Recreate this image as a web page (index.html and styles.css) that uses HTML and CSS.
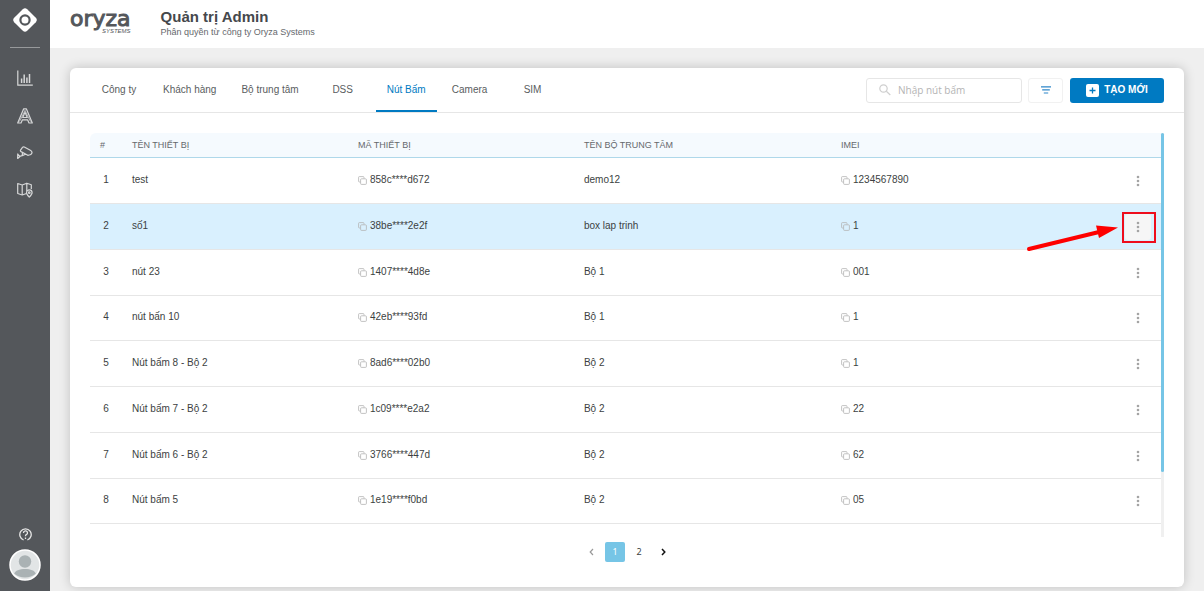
FILE: index.html
```html
<!DOCTYPE html>
<html lang="vi">
<head>
<meta charset="utf-8">
<meta name="viewport" content="width=device-width, initial-scale=1">
<title>Quản trị Admin</title>
<link rel="stylesheet" href="styles.css">
</head>
<body>
<svg class="sprite" aria-hidden="true">
  <symbol id="copy" viewBox="0 0 9 9"><path d="M2.500 6H1.400a.8.8 0 0 1-.8-.8V1.400a.8.8 0 0 1 .8-.8h3.800a.8.8 0 0 1 .8.8v1.100M3.500 2.800h4a.9.9 0 0 1 .9.9v3.800a.9.9 0 0 1-.9.9h-4a.9.9 0 0 1-.9-.9V3.700a.9.9 0 0 1 .9-.9z" fill="none" stroke="#b4b4b4" stroke-width=".8"/></symbol>
  <symbol id="dots" viewBox="0 0 4 12"><g fill="#a4a4a4"><circle cx="2" cy="2" r="1.300"/><circle cx="2" cy="6" r="1.300"/><circle cx="2" cy="10" r="1.300"/></g></symbol>
</svg>
<div class="app">
  <aside class="sidebar">
    <a class="mark" href="#" aria-label="Oryza">
      <svg width="24" height="24" viewBox="0 0 24 24"><path d="M9.800 1.200Q12-.8 14.200 1.200L22.800 9.800Q24.800 12 22.800 14.200L14.200 22.800Q12 24.800 9.800 22.800L1.200 14.200Q-.8 12 1.200 9.800Z" fill="#fff"/><circle cx="12" cy="12" r="4.600" fill="none" stroke="#54575b" stroke-width="2.200"/></svg>
    </a>
    <nav class="side-nav">
      <a href="#" aria-label="Thống kê"><svg width="16" height="16" viewBox="0 0 16 16" fill="none" stroke="#d6d7d8" stroke-width="1.200"><path d="M.8.500V15.200H15.800"/><path d="M4.600 13V8.500M7.200 13V4.500M9.900 13V7.500M12.500 13V4" stroke-width="1.500"/></svg></a>
      <a href="#" aria-label="Phân quyền"><svg width="16" height="16" viewBox="0 0 16 16" fill="none" stroke="#d6d7d8" stroke-width="1.200" stroke-linejoin="round"><path d="M6.700.8H9.300L15.300 15H12L10.600 11.800H5.400L4 15H.7Z"/><path d="M8 4.200 10.300 9.500H5.700Z"/><path d="M2.500 13.500 8 2.300 13.500 13.500" stroke-width=".7"/></svg></a>
      <a href="#" aria-label="Camera"><svg width="16" height="14" viewBox="0 0 16 14" fill="none" stroke="#d6d7d8" stroke-width="1.200" stroke-linejoin="round"><path d="M5.500 1.400Q6.200.5 7.300 1L13.300 4.300Q15.600 5.600 14.800 7.300 14.200 9 12.300 9L10.800 9.300 4 5.600Q3 4.900 3.700 3.900ZM5.500 6.600 5.200 9.600 2 10.500M.7 7.500V13M.9 8.500 3 10.500.9 12.400M5.200 9.600 8.500 8.200"/></svg></a>
      <a href="#" aria-label="Bản đồ"><svg width="16" height="16" viewBox="0 0 16 16" fill="none" stroke="#d6d7d8" stroke-width="1.200" stroke-linejoin="round"><path d="M9.500 11.500 5.200 13 .7 11.500V1.500L5.200 3 9.800 1.200 14.300 2.700V7M5.200 3V13M9.800 1.200V9"/><path d="M12.300 15.200C10.300 13 9.500 12 9.500 10.700A2.800 2.800 0 0 1 15.100 10.700C15.100 12 14.300 13 12.300 15.200Z"/><circle cx="12.300" cy="10.700" r=".8"/></svg></a>
    </nav>
    <div class="side-foot">
      <a href="#" aria-label="Trợ giúp"><svg width="13" height="13" viewBox="0 0 13 13" fill="none" stroke="#e6e6e6" stroke-width="1.300"><path d="M4.600 12A5.700 5.700 0 1 1 8.400 12"/><path d="M4.500 5A2 2 0 1 1 7.300 6.700Q6.500 7.100 6.500 8.200M6.500 9.600V11"/></svg></a>
      <button class="avatar" type="button" aria-label="Tài khoản"><svg width="32" height="32" viewBox="0 0 32 32"><circle cx="16" cy="16" r="15" fill="#e2e5e6" stroke="#fff" stroke-width="1.500"/><circle cx="16" cy="12.500" r="6.200" fill="#aab2b4"/><path d="M5.200 24.800C6 21.500 10.500 20 16 20S26 21.500 26.800 24.800Q22.500 28.500 16 28.500T5.200 24.800Z" fill="#aab2b4"/></svg></button>
    </div>
  </aside>
  <div class="page">
    <header class="topbar">
      <a class="brand" href="#"><span class="brand-name">oryza</span><span class="brand-sub">SYSTEMS</span></a>
      <div class="heading">
        <h1>Quản trị Admin</h1>
        <p>Phân quyền từ công ty Oryza Systems</p>
      </div>
    </header>
    <main class="content">
      <section class="card">
        <div class="toolbar">
          <nav class="tabs">
            <a href="#">Công ty</a>
            <a href="#">Khách hàng</a>
            <a href="#">Bộ trung tâm</a>
            <a href="#">DSS</a>
            <a href="#" class="active" aria-current="page">Nút Bấm</a>
            <a href="#">Camera</a>
            <a href="#">SIM</a>
          </nav>
          <div class="tools">
            <label class="search">
              <svg width="12" height="12" viewBox="0 0 12 12" fill="none" stroke="#cfcfcf" stroke-width="1.200"><circle cx="4.500" cy="4.500" r="3.700"/><path d="M7.300 7.300 11.300 11"/></svg>
              <input type="text" placeholder="Nhập nút bấm" aria-label="Nhập nút bấm">
            </label>
            <button class="filter" type="button" aria-label="Bộ lọc"><svg width="10" height="8" viewBox="0 0 10 8" stroke="#2f87c9" stroke-width="1.200"><path d="M0 .8H10M1.200 3.900H8.800M2.800 7H7.200"/></svg></button>
            <button class="create" type="button"><svg width="13" height="13" viewBox="0 0 13 13"><rect width="13" height="13" rx="2" fill="#fff"/><path d="M6.500 3.500V9.500M3.500 6.500H9.500" stroke="#007ac2" stroke-width="1.300"/></svg>TẠO MỚI</button>
          </div>
        </div>
        <div class="table-area">
          <table>
            <colgroup><col class="c-no"><col class="c-name"><col class="c-code"><col class="c-box"><col><col class="c-act"></colgroup>
            <thead><tr><th>#</th><th>TÊN THIẾT BỊ</th><th>MÃ THIẾT BỊ</th><th>TÊN BỘ TRUNG TÂM</th><th>IMEI</th><th></th></tr></thead>
            <tbody>
              <tr><td>1</td><td>test</td><td><svg class="copy"><use href="#copy"/></svg>858c****d672</td><td>demo12</td><td><svg class="copy"><use href="#copy"/></svg>1234567890</td><td><button class="more" type="button" aria-label="Thao tác"><svg><use href="#dots"/></svg></button></td></tr>
              <tr class="selected"><td>2</td><td>số1</td><td><svg class="copy"><use href="#copy"/></svg>38be****2e2f</td><td>box lap trinh</td><td><svg class="copy"><use href="#copy"/></svg>1</td><td><button class="more" type="button" aria-label="Thao tác"><svg><use href="#dots"/></svg></button><span class="callout"><svg width="94" height="28" viewBox="0 0 94 28"><path d="M3 24 72 7.200" stroke="#fe0000" stroke-width="4" stroke-linecap="round"/><path d="M92 2.500 70 .5 73 13Z" fill="#fe0000"/></svg></span></td></tr>
              <tr><td>3</td><td>nút 23</td><td><svg class="copy"><use href="#copy"/></svg>1407****4d8e</td><td>Bộ 1</td><td><svg class="copy"><use href="#copy"/></svg>001</td><td><button class="more" type="button" aria-label="Thao tác"><svg><use href="#dots"/></svg></button></td></tr>
              <tr><td>4</td><td>nút bấn 10</td><td><svg class="copy"><use href="#copy"/></svg>42eb****93fd</td><td>Bộ 1</td><td><svg class="copy"><use href="#copy"/></svg>1</td><td><button class="more" type="button" aria-label="Thao tác"><svg><use href="#dots"/></svg></button></td></tr>
              <tr><td>5</td><td>Nút bấm 8 - Bộ 2</td><td><svg class="copy"><use href="#copy"/></svg>8ad6****02b0</td><td>Bộ 2</td><td><svg class="copy"><use href="#copy"/></svg>1</td><td><button class="more" type="button" aria-label="Thao tác"><svg><use href="#dots"/></svg></button></td></tr>
              <tr><td>6</td><td>Nút bấm 7 - Bộ 2</td><td><svg class="copy"><use href="#copy"/></svg>1c09****e2a2</td><td>Bộ 2</td><td><svg class="copy"><use href="#copy"/></svg>22</td><td><button class="more" type="button" aria-label="Thao tác"><svg><use href="#dots"/></svg></button></td></tr>
              <tr><td>7</td><td>Nút bấm 6 - Bộ 2</td><td><svg class="copy"><use href="#copy"/></svg>3766****447d</td><td>Bộ 2</td><td><svg class="copy"><use href="#copy"/></svg>62</td><td><button class="more" type="button" aria-label="Thao tác"><svg><use href="#dots"/></svg></button></td></tr>
              <tr><td>8</td><td>Nút bấm 5</td><td><svg class="copy"><use href="#copy"/></svg>1e19****f0bd</td><td>Bộ 2</td><td><svg class="copy"><use href="#copy"/></svg>05</td><td><button class="more" type="button" aria-label="Thao tác"><svg><use href="#dots"/></svg></button></td></tr>
            </tbody>
          </table>
          <div class="track"><div class="thumb"></div></div>
        </div>
        <nav class="pager" aria-label="Phân trang">
          <button type="button" aria-label="Trang trước" disabled><svg width="5" height="8" viewBox="0 0 5 8"><path d="M4 1 1.200 4 4 7" fill="none" stroke="#999" stroke-width="1.200"/></svg></button>
          <button type="button" class="current" aria-current="page">1</button>
          <button type="button">2</button>
          <button type="button" aria-label="Trang sau"><svg width="5" height="8" viewBox="0 0 5 8"><path d="M1 1 3.800 4 1 7" fill="none" stroke="#111" stroke-width="1.500"/></svg></button>
        </nav>
      </section>
    </main>
  </div>
</div>
</body>
</html>
```
FILE: styles.css
```css
* { box-sizing: border-box; }
body {
  margin: 0;
  font: 10px/14px "Liberation Sans", Arial, sans-serif;
  color: #3c3f42;
  background: #efefef;
}
a { color: inherit; text-decoration: none; }
button { border: 0; padding: 0; background: none; font: inherit; color: inherit; }
svg { display: block; }
.sprite { position: absolute; width: 0; height: 0; }

.app { display: flex; min-height: 100vh; }
.sidebar {
  flex: 0 0 50px;
  display: flex;
  flex-direction: column;
  align-items: center;
  padding: 8px 0 10px;
  background: #54575b;
}
.mark { padding-bottom: 15px; }
.side-nav {
  display: flex;
  flex-direction: column;
  align-items: center;
  gap: 22px;
  width: 30px;
  padding-top: 22px;
  border-top: 1px solid #97999b;
}
.side-foot {
  display: flex;
  flex-direction: column;
  align-items: center;
  gap: 8px;
  margin-top: auto;
}
.page { flex: 1; min-width: 0; display: flex; flex-direction: column; }

.topbar {
  display: flex;
  align-items: flex-start;
  gap: 30px;
  height: 48px;
  padding: 8px 20px;
  background: #fff;
}
.brand { display: flex; flex-direction: column; color: #54575b; }
.brand-name {
  font: 22px/19px "DejaVu Sans", sans-serif;
  padding-top: 1px;
  -webkit-text-stroke: 1px #54575b;
}
.brand-sub {
  align-self: flex-end;
  font: italic 6px/6px "Liberation Sans", Arial, sans-serif;
}
.heading h1 { margin: 0; font-size: 15px; line-height: 18px; color: #45484c; }
.heading p { margin: 0; font-size: 9px; line-height: 12px; color: #66696d; }

.content { flex: 1; display: flex; padding: 20px 20px 4px; }
.card {
  flex: 1;
  min-width: 0;
  background: #fff;
  border-radius: 6px;
  box-shadow: 0 0 12px rgba(0, 0, 0, 0.2);
}
.toolbar {
  display: flex;
  justify-content: space-between;
  align-items: stretch;
  padding: 0 20px 0 19px;
  border-bottom: 1px solid #e6e6e6;
}
.tabs { display: flex; gap: 3px; color: #5a5d60; }
.tabs a {
  min-width: 60px;
  height: 44px;
  padding: 15px 11px 0;
  text-align: center;
  border-bottom: 2px solid transparent;
}
.tabs .active { color: #007ac2; border-color: #007ac2; }
.tools { display: flex; align-items: center; gap: 6px; }
.search {
  display: flex;
  align-items: center;
  gap: 7px;
  width: 156px;
  height: 25px;
  padding: 0 12px;
  border: 1px solid #e6e6e6;
  border-radius: 3px;
}
.search svg { flex: none; }
.search input {
  flex: 1;
  min-width: 0;
  padding: 0;
  border: 0;
  outline: 0;
  font: 10px/14px "Open Sans", sans-serif;
}
.search input::placeholder { color: #b4b4b4; }
.filter {
  display: grid;
  place-items: center;
  width: 35px;
  height: 25px;
  border: 1px solid #f1f1f1;
  border-radius: 3px;
}
.create {
  display: flex;
  align-items: center;
  justify-content: center;
  gap: 5px;
  width: 94px;
  height: 25px;
  margin-left: 1px;
  border-radius: 3px;
  background: #007ac2;
  color: #fff;
  font-weight: bold;
}

.table-area { display: flex; padding: 20px 20px 0; }
table { flex: 1; table-layout: fixed; width: 100%; border-collapse: separate; border-spacing: 0; align-self: flex-start; }
.c-no { width: 42px; }
.c-name, .c-code { width: 21.1%; }
.c-box { width: 24%; }
.c-act { width: 46px; }
th {
  height: 25px;
  padding: 0;
  font-size: 9px;
  font-weight: normal;
  text-align: left;
  color: #66696d;
  background: #f5fafe;
  border-bottom: 1px solid #afd8ea;
}
th:first-child { padding-left: 10px; border-top-left-radius: 6px; }
td { height: 46px; padding: 0 0 2px; border-bottom: 1px solid #e6e6e6; }
tr:nth-child(4n) td { height: 45px; }
td:first-child { padding-right: 10px; text-align: center; }
td:last-child { position: relative; padding-bottom: 0; }
.selected td { background: #d9f0fe; }
.copy { display: inline-block; width: 9px; height: 9px; margin-right: 3px; vertical-align: -2px; }
.more {
  display: grid;
  place-items: center;
  width: 26px;
  height: 26px;
  margin: 0 auto;
  border-radius: 3px;
}
.more svg { width: 4px; height: 12px; }
.selected .more { background: #f6f6f6; }
.callout {
  position: absolute;
  top: 8px;
  right: 5px;
  width: 34px;
  height: 31px;
  border: 2px solid #ee0d1c;
}
.callout svg { position: absolute; top: 11px; right: 34px; }
.track { flex: 0 0 3px; height: 404px; background: #f0f0f0; }
.thumb { height: 84%; background: #76c5e6; border-radius: 2px; }

.pager { display: flex; justify-content: center; gap: 4px; padding: 5px 0 25px; }
.pager button {
  display: grid;
  place-items: center;
  width: 20px;
  height: 20px;
  border-radius: 2px;
  font: 9px/12px "Noto Sans", sans-serif;
}
.pager .current { background: #76c5e6; color: #fff; }
```
